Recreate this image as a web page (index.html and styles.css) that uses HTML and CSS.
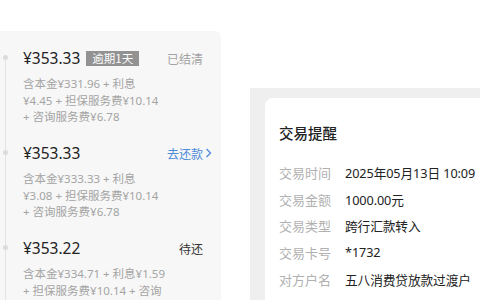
FILE: index.html
```html
<!DOCTYPE html>
<html lang="zh-CN">
<head>
    <meta charset="UTF-8">
    <meta name="viewport" content="width=device-width, initial-scale=1.0">
    <title>还款计划</title>
    <link rel="stylesheet" href="styles.css">
</head>
<body>

    <div class="page">
        <section class="bills">
            <div class="bill">
                <span class="dot"></span>
                <div class="bill-head">
                    <span class="amount">¥353.33</span>
                    <span class="badge">逾期1天</span>
                    <span class="status done">已结清</span>
                </div>
                <p class="detail">含本金¥331.96 + 利息<br>¥4.45 + 担保服务费¥10.14<br>+ 咨询服务费¥6.78</p>
            </div>

            <div class="bill">
                <span class="dot"></span>
                <div class="bill-head">
                    <span class="amount">¥353.33</span>
                    <span class="status pay">去还款 <svg width="7" height="10" viewBox="0 0 7 10"><path d="M1.5 1 L5.5 5 L1.5 9" fill="none" stroke="#4d8ad8" stroke-width="1.3"/></svg></span>
                </div>
                <p class="detail">含本金¥333.33 + 利息<br>¥3.08 + 担保服务费¥10.14<br>+ 咨询服务费¥6.78</p>
            </div>

            <div class="bill">
                <span class="dot"></span>
                <div class="bill-head">
                    <span class="amount">¥353.22</span>
                    <span class="status wait">待还</span>
                </div>
                <p class="detail">含本金¥334.71 + 利息¥1.59<br>+ 担保服务费¥10.14 + 咨询<br>服务费¥6.78</p>
            </div>
        </section>

        <section class="notice">
            <div class="notice-card">
                <h2>交易提醒</h2>
                <div class="row"><span class="label">交易时间</span><span class="value">2025年05月13日 10:09</span></div>
                <div class="row"><span class="label">交易金额</span><span class="value">1000.00元</span></div>
                <div class="row"><span class="label">交易类型</span><span class="value">跨行汇款转入</span></div>
                <div class="row"><span class="label">交易卡号</span><span class="value">*1732</span></div>
                <div class="row"><span class="label">对方户名</span><span class="value">五八消费贷放款过渡户</span></div>
            </div>
        </section>
    </div>

</body>
</html>
```

FILE: styles.css
```css
body {
    margin: 0;
    background: #fff;
    font-family: "Noto Sans", "Noto Sans CJK SC", sans-serif;
    overflow: hidden;
}

.page {
    display: flex;
    align-items: flex-start;
    gap: 29px;
    height: 300px;
}

/* 左侧还款计划 */
.bills {
    position: relative;
    width: 221px;
    height: 269px;
    margin-top: 31px;
    background: #f7f7f7;
    border-top-right-radius: 6px;
    padding: 16px 0 0 23px;
    box-sizing: border-box;
}

.bills::before {
    content: "";
    position: absolute;
    left: 5px;
    top: 24px;
    bottom: 0;
    width: 1px;
    background: #e4e4e4;
}

.bill {
    position: relative;
    height: 95px;
}

.dot {
    position: absolute;
    left: -20px;
    top: 8px;
    width: 5px;
    height: 5px;
    border-radius: 50%;
    background: #dcdcdc;
}

.bill-head {
    display: flex;
    align-items: center;
    height: 22px;
}

.amount {
    font-size: 15.5px;
    color: #222;
    font-family: "Noto Sans", sans-serif;
}

.badge {
    margin-left: 6px;
    padding: 0 6px;
    height: 15px;
    line-height: 15px;
    font-size: 11.5px;
    color: #fff;
    background: #929292;
    font-family: "Noto Sans CJK SC", sans-serif;
}

.status {
    margin-left: auto;
    margin-right: 18px;
    font-size: 12px;
    font-family: "Noto Sans CJK SC", sans-serif;
}

.status.done {
    color: #a3a3a3;
}

.status.pay {
    color: #4d8ad8;
    margin-right: 9px;
    display: flex;
    align-items: center;
    gap: 2px;
}

.status.wait {
    color: #333;
}

.detail {
    margin: 7px 0 0;
    font-size: 11.5px;
    line-height: 16.5px;
    color: #a4a4a4;
}

/* 右侧交易提醒 */
.notice {
    flex: 1;
    height: 212px;
    margin-top: 88px;
    background: #efefef;
    padding: 10px 0 0 15px;
    box-sizing: border-box;
}

.notice-card {
    height: 100%;
    background: #fff;
    border-top-left-radius: 8px;
    padding: 24px 0 0 14px;
    box-sizing: border-box;
}

.notice-card h2 {
    margin: 0 0 15px;
    font-size: 14.5px;
    font-weight: 500;
    color: #222;
    line-height: 22px;
    font-family: "Noto Sans CJK SC", sans-serif;
}

.row {
    display: flex;
    height: 26.7px;
    align-items: center;
    white-space: nowrap;
}

.label {
    width: 66px;
    font-size: 13px;
    color: #b0b0b0;
    font-family: "Noto Sans CJK SC", sans-serif;
}

.value {
    font-size: 12.7px;
    letter-spacing: -0.1px;
    color: #222;
}
```
